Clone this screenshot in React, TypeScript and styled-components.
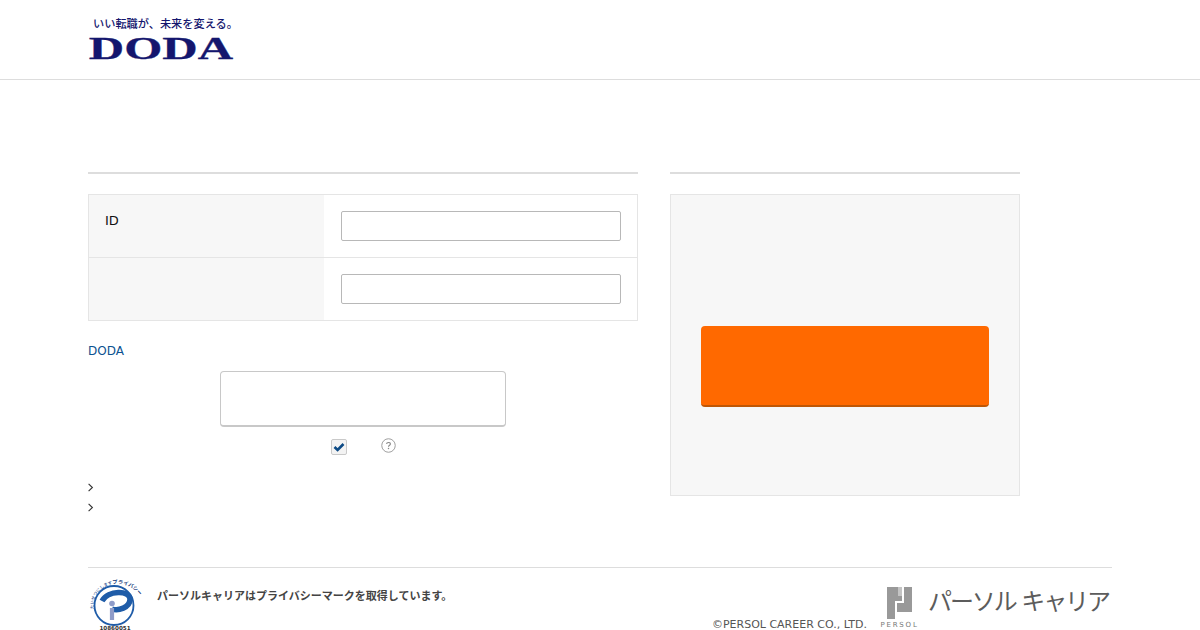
import React from "react"
import styled, { createGlobalStyle } from "styled-components"

const GlobalStyle = createGlobalStyle`
	html, body {
		margin: 0;
		padding: 0;
		height: 630px;
		overflow: hidden;
		background: #fff;
	}
	body {
		font-family: "DejaVu Sans", "Noto Sans CJK JP", sans-serif;
		font-size: 13px;
		color: #222;
	}
`

const App = () => {

	return (
		<>
			<GlobalStyle />

			<HeaderBar>
				<LogoLink href="#">
					<Tagline>いい転職が、未来を変える。</Tagline>
					<Wordmark>DODA</Wordmark>
				</LogoLink>
			</HeaderBar>

			<Main>
				<LeftColumn>
					<Rule />

					<FormTable>
						<FormRow>
							<FormLabel>ID</FormLabel>
							<FormField><TextInput type="text" aria-label="ID" /></FormField>
						</FormRow>
						<FormRow>
							<FormLabel />
							<FormField><TextInput type="password" aria-label="password" /></FormField>
						</FormRow>
					</FormTable>

					<Notice>DODA</Notice>
					<EmptyBox />

					<CheckRow>
						<CheckBox>
							<svg width="12" height="10" viewBox="0 0 12 10">
								<path d="M1.5 5 L4.6 8 L10.5 2" fill="none" stroke="#0d4a85" strokeWidth="2.6" />
							</svg>
						</CheckBox>
						<HelpIcon width="15" height="15" viewBox="0 0 16 16">
							<circle cx="8" cy="8" r="7.2" fill="#fff" stroke="#999" />
							<path d="M6 6.4 C6 4.2 10 4.2 10 6.3 C10 7.8 8 7.6 8 9.3" fill="none" stroke="#888" strokeWidth="1.2" />
							<circle cx="8" cy="11.2" r=".8" fill="#888" />
						</HelpIcon>
					</CheckRow>

					<LinkList>
						<li><Chevron /></li>
						<li><Chevron /></li>
					</LinkList>
				</LeftColumn>

				<RightColumn>
					<Rule />
					<LoginPanel>
						<LoginButton type="button" aria-label="login" />
					</LoginPanel>
				</RightColumn>
			</Main>

			<Footer>
				<PrivacyBlock>
					<PrivacyMark />
					<PrivacyText>パーソルキャリアはプライバシーマークを取得しています。</PrivacyText>
				</PrivacyBlock>
				<CompanyBlock>
					<Copyright>©PERSOL CAREER CO., LTD.</Copyright>
					<PersolLogo>
						<svg width="25" height="32" viewBox="0 0 25 32">
							<path d="M0 0H15V14H8V32H0Z" fill="#999" />
							<path d="M11 0H15V9H11Z" fill="#c4c4c4" />
							<path d="M17 0H25V25H10V16H17Z" fill="#999" />
						</svg>
						<PersolLabel>PERSOL</PersolLabel>
					</PersolLogo>
					<PersolKana>パーソル キャリア</PersolKana>
				</CompanyBlock>
			</Footer>
		</>
	)
}

const Chevron = () => (
	<svg width="6" height="9" viewBox="0 0 6 9">
		<path d="M.6 .8 L4.4 4.5 L.6 8.2" fill="none" stroke="#333" strokeWidth="1.1" />
	</svg>
)

const PrivacyMark = () => (
	<MarkSvg width="54" height="54" viewBox="0 0 54 54">
		<defs>
			<path id="mark-arc" d="M6 32 C3 15 20 5 32 7 C42 8 48 13 56 24" />
		</defs>
		<circle cx="26" cy="28.5" r="19.5" fill="#fff" stroke="#1f5ca8" strokeWidth="1.8" />
		<path d="M14 24 C20 13 42 13 42 22 C42 31 30 34 24 32" fill="none" stroke="#1f5ca8" strokeWidth="5.5" />
		<circle cx="24" cy="26.5" r="2.8" fill="#8f9cc9" />
		<path d="M24 31V43" stroke="#8f9cc9" strokeWidth="4.2" />
		<text fontSize="4.3" fontWeight="500" fill="#2f4f8f" fontFamily="'Noto Sans CJK JP', sans-serif">
			<textPath href="#mark-arc">たいせつにします<tspan fontSize="5.2" fontWeight="700" fill="#15387a">プライバシー</tspan></textPath>
		</text>
		<text x="27" y="53" fontSize="5.6" fontWeight="700" textAnchor="middle" fill="#333" fontFamily="'DejaVu Sans', sans-serif">10860051</text>
	</MarkSvg>
)

const MarkSvg = styled.svg`
	overflow: visible;
	flex: none;
`

const HeaderBar = styled.header`
	height: 79px;
	border-bottom: 1px solid #ddd;
	padding-left: 88px;
`

const LogoLink = styled.a`
	display: block;
	width: 146px;
	padding-top: 16px;
	text-decoration: none;
	color: #14166e;
`

const Tagline = styled.div`
	font-family: "Noto Sans CJK JP", sans-serif;
	font-size: 11.2px;
	font-weight: 500;
	line-height: 15px;
	padding-left: 5px;
	white-space: nowrap;
`

const Wordmark = styled.div`
	margin-top: 4px;
	padding-left: .5px;
	font-family: "Liberation Serif", serif;
	font-size: 31px;
	font-weight: 700;
	line-height: 27px;
	transform: scaleX(1.58);
	transform-origin: left center;
	white-space: nowrap;
	color: #14166e;
	-webkit-text-stroke: .3px #14166e;
`

const Main = styled.main`
	display: flex;
	gap: 32px;
	padding: 92px 0 0 88px;
`

const LeftColumn = styled.section`
	width: 550px;
`

const RightColumn = styled.section`
	width: 350px;
`

const Rule = styled.div`
	height: 2px;
	background: #ddd;
	margin-bottom: 20px;
`

const FormTable = styled.div`
	border: 1px solid #e5e5e5;
`

const FormRow = styled.div`
	display: grid;
	grid-template-columns: 235px 1fr;
	height: 62px;

	& + & {
		border-top: 1px solid #e5e5e5;
	}
`

const FormLabel = styled.div`
	background: #f7f7f7;
	padding: 17px 16px 0;
	line-height: 17px;
	color: #111;
`

const FormField = styled.div`
	padding: 16px 16px 0 17px;
`

const TextInput = styled.input`
	display: block;
	box-sizing: border-box;
	width: 280px;
	height: 30px;
	border: 1px solid #b8b8b8;
	border-radius: 2px;
	background: #fff;
	padding: 0 6px;
`

const Notice = styled.p`
	margin: 21px 0 0;
	line-height: 18px;
	color: #0b5290;
	font-size: 12px;
`

const EmptyBox = styled.div`
	box-sizing: border-box;
	width: 286px;
	height: 56px;
	margin: 11px auto 0;
	background: #fff;
	border: 1px solid #c8c8c8;
	border-bottom-width: 2px;
	border-radius: 4px;
`

const CheckRow = styled.div`
	display: flex;
	align-items: flex-start;
	gap: 34px;
	height: 16px;
	margin: 12px 0 0 243px;
`

const CheckBox = styled.span`
	box-sizing: border-box;
	display: flex;
	align-items: center;
	justify-content: center;
	width: 16px;
	height: 16px;
	border: 1px solid #c9c9c9;
	border-radius: 2px;
	background: #f3f3f3;
`

const HelpIcon = styled.svg`
	margin-top: -1px;
`

const LinkList = styled.ul`
	list-style: none;
	margin: 22px 0 0;
	padding: 0;

	li {
		display: flex;
		align-items: center;
		height: 20px;
	}
`

const LoginPanel = styled.div`
	box-sizing: border-box;
	display: flex;
	align-items: center;
	justify-content: center;
	height: 302px;
	padding-top: 43px;
	background: #f7f7f7;
	border: 1px solid #e5e5e5;
`

const LoginButton = styled.button`
	display: block;
	width: 288px;
	height: 81px;
	padding: 0;
	border: 0;
	border-bottom: 2px solid #bf5706;
	border-radius: 4px;
	background: #ff6900;
`

const Footer = styled.footer`
	display: flex;
	justify-content: space-between;
	box-sizing: border-box;
	width: 1024px;
	height: 63px;
	margin: 50px 0 0 88px;
	padding-top: 9px;
	border-top: 1px solid #ddd;
`

const PrivacyBlock = styled.div`
	display: flex;
	gap: 15px;
`

const PrivacyText = styled.p`
	margin: 10px 0 0;
	font-family: "Noto Sans CJK JP", sans-serif;
	font-size: 11px;
	font-weight: 700;
	line-height: 16px;
	color: #444;
	white-space: nowrap;
`

const CompanyBlock = styled.div`
	display: flex;
	align-items: flex-start;
	padding-right: 2px;
`

const Copyright = styled.small`
	margin: 41px 14px 0 0;
	font-size: 11px;
	line-height: 14px;
	color: #555;
	white-space: nowrap;
`

const PersolLogo = styled.div`
	display: flex;
	flex-direction: column;
	align-items: center;
	width: 37px;
	margin: 10px 10px 0 0;
`

const PersolLabel = styled.span`
	margin-top: 1px;
	font-size: 7px;
	line-height: 10px;
	letter-spacing: 1.8px;
	color: #777;
	white-space: nowrap;
`

const PersolKana = styled.span`
	width: 182px;
	margin-top: 8px;
	font-family: "Noto Sans CJK JP", sans-serif;
	font-size: 24px;
	font-weight: 400;
	line-height: 30px;
	letter-spacing: -2.1px;
	word-spacing: 2.4px;
	color: #5c5c5c;
	white-space: nowrap;
`

export default App
